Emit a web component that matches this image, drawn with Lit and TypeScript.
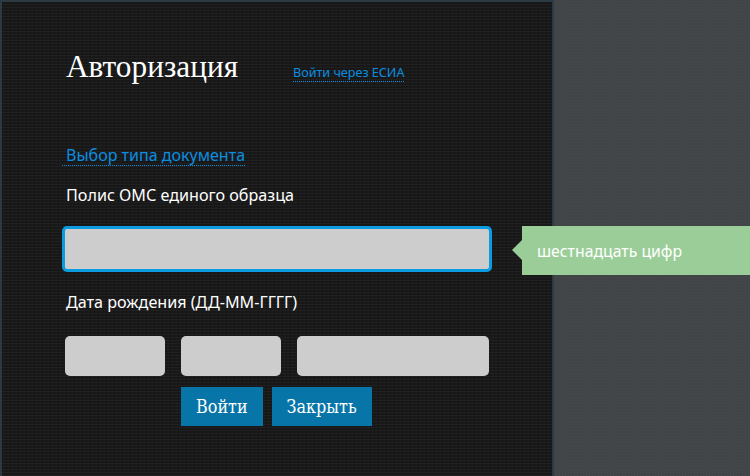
import { LitElement, html, css } from "lit";
import { customElement } from "lit/decorators.js";

@customElement("app-root")
export class AppRoot extends LitElement {
  static styles = css`
    :host {
      display: block;
      width: 750px;
      height: 476px;
      overflow: hidden;
      position: relative;
      font-family: "Noto Sans", "Open Sans", sans-serif;
      background-color: #414547;
      background-image: radial-gradient(#474b4d 0.6px, transparent 0.8px);
      background-size: 3px 3px;
    }
    .panel {
      box-sizing: border-box;
      width: 554px;
      height: 476px;
      border: solid #2c3a44;
      border-width: 2px 2px 0 2px;
      padding: 47px 0 0 64px;
      background-color: #191919;
      background-image:
        repeating-linear-gradient(0deg, #202020 0 1px, transparent 1px 3px),
        repeating-linear-gradient(90deg, #141414 0 1px, transparent 1px 4px);
    }
    .head {
      display: flex;
      align-items: baseline;
      height: 40px;
    }
    h1 {
      margin: 0;
      font: 400 31.3px/36px "Liberation Serif", serif;
      color: #fff;
      width: 227px;
    }
    a {
      color: #0b8ee0;
      text-decoration: none;
      border-bottom: 1px dotted #0b8ee0;
    }
    .esia {
      font-size: 12.6px;
      line-height: 16px;
    }
    .doc {
      display: inline-block;
      margin: 56px 0 0 -4px;
      padding-left: 4px;
      font-size: 16.05px;
      line-height: 20px;
    }
    .label {
      color: #fff;
      font-size: 16.15px;
      line-height: 20px;
    }
    .oms {
      margin-top: 19px;
    }
    .main-input {
      box-sizing: border-box;
      display: block;
      width: 430px;
      height: 46px;
      margin: 21px 0 0 -4px;
      background: #cdcdcd;
      border: 3px solid #0a9be0;
      border-radius: 5px;
    }
    .dob {
      margin-top: 20px;
    }
    .row {
      display: flex;
      gap: 16px;
      margin: 24px 0 0 -1px;
    }
    .box {
      width: 100px;
      height: 40px;
      border-radius: 5px;
      background: #cdcdcd;
    }
    .box.wide {
      width: 192px;
    }
    .actions {
      display: flex;
      gap: 9px;
      margin: 11px 0 0 115px;
    }
    .btn {
      height: 39px;
      padding: 0 15px;
      display: flex;
      align-items: center;
      background: #0875a8;
      color: #fff;
      font: 400 17.8px "DejaVu Serif", serif;
      font-stretch: condensed;
    }
    .tip {
      position: absolute;
      left: 522px;
      top: 226px;
      width: 228px;
      height: 49px;
      box-sizing: border-box;
      padding-left: 15px;
      display: flex;
      align-items: center;
      background: #9bcd98;
      color: #fff;
      font-size: 15.8px;
    }
    .tip::before {
      content: "";
      position: absolute;
      left: -10px;
      top: 14px;
      border: 10px solid transparent;
      border-left: 0;
      border-right-color: #9bcd98;
    }
  `;

  render() {
    return html`
      <div class="panel">
        <div class="head">
          <h1>Авторизация</h1>
          <a class="esia">Войти через ЕСИА</a>
        </div>
        <a class="doc">Выбор типа документа</a>
        <div class="label oms">Полис ОМС единого образца</div>
        <div class="main-input"></div>
        <div class="label dob">Дата рождения (ДД-ММ-ГГГГ)</div>
        <div class="row">
          <div class="box"></div>
          <div class="box"></div>
          <div class="box wide"></div>
        </div>
        <div class="actions">
          <div class="btn">Войти</div>
          <div class="btn">Закрыть</div>
        </div>
      </div>
      <div class="tip">шестнадцать цифр</div>
    `;
  }
}
